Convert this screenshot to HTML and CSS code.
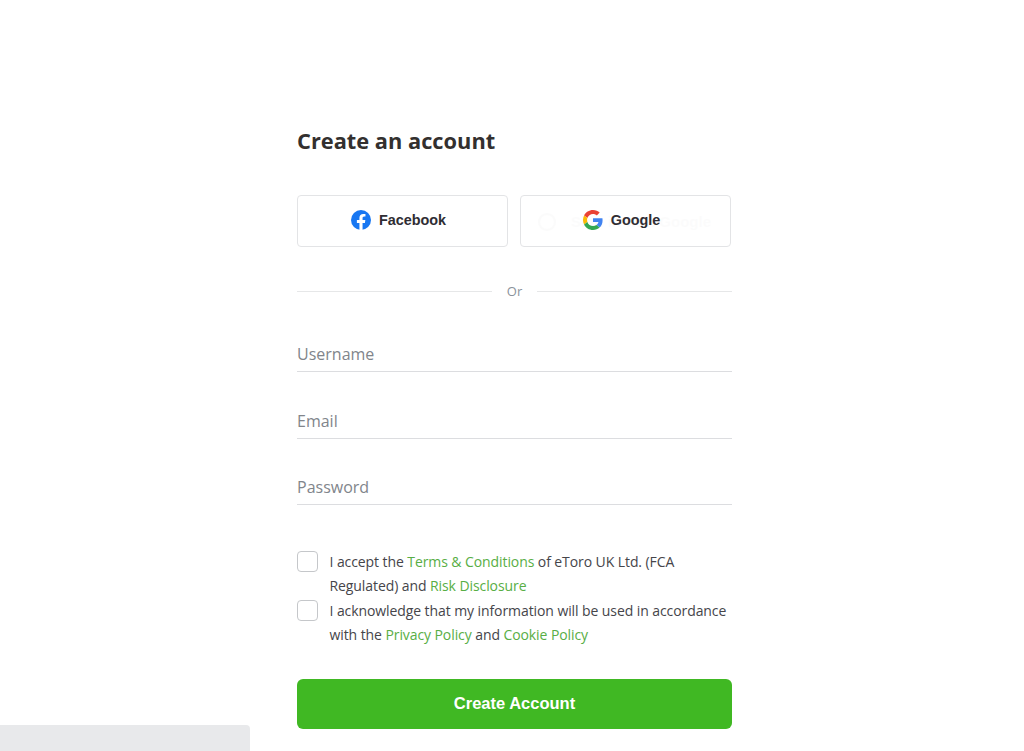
FILE: index.html
```html
<!DOCTYPE html>
<html lang="en">
<head>
    <meta charset="UTF-8">
    <meta name="viewport" content="width=device-width, initial-scale=1.0">
    <title>Create an account</title>
    <link rel="stylesheet" href="styles.css">
</head>
<body>
    <div class="container">
        <h1 class="title">Create an account</h1>

        <div class="social-row">
            <button class="social-btn" type="button">
                <svg class="social-icon" viewBox="0 0 20 20" aria-hidden="true">
                    <circle cx="10" cy="10" r="10" fill="#1877f2"/>
                    <path fill="#fff" d="M13.9 12.9l.44-2.9h-2.78V8.12c0-.79.39-1.56 1.63-1.56h1.26V4.1s-1.15-.2-2.24-.2c-2.29 0-3.78 1.39-3.78 3.9V10H5.89v2.9h2.54v7c.51.08 1.03.1 1.56.1s1.06-.03 1.57-.1v-7z"/>
                </svg>
                <span>Facebook</span>
            </button>
            <button class="social-btn" type="button">
                <span class="ghost-label">Sign in with Google</span>
                <svg class="social-icon" viewBox="0 0 48 48" aria-hidden="true">
                    <path fill="#ea4335" d="M24 9.5c3.54 0 6.71 1.22 9.21 3.6l6.85-6.85C35.9 2.38 30.47 0 24 0 14.62 0 6.51 5.38 2.56 13.22l7.98 6.19C12.43 13.72 17.74 9.5 24 9.5z"/>
                    <path fill="#4285f4" d="M46.98 24.55c0-1.57-.15-3.09-.38-4.55H24v9.02h12.94c-.58 2.96-2.26 5.48-4.78 7.18l7.73 6c4.51-4.18 7.09-10.36 7.09-17.65z"/>
                    <path fill="#fbbc05" d="M10.53 28.59c-.48-1.45-.76-2.99-.76-4.59s.27-3.14.76-4.59l-7.98-6.19C.92 16.46 0 20.12 0 24c0 3.88.92 7.54 2.56 10.78l7.97-6.19z"/>
                    <path fill="#34a853" d="M24 48c6.48 0 11.93-2.13 15.89-5.81l-7.73-6c-2.15 1.45-4.92 2.3-8.16 2.3-6.26 0-11.57-4.22-13.47-9.91l-7.98 6.19C6.51 42.62 14.62 48 24 48z"/>
                </svg>
                <span>Google</span>
            </button>
        </div>

        <div class="divider"><span>Or</span></div>

        <div class="fields">
            <label class="field">Username</label>
            <label class="field">Email</label>
            <label class="field">Password</label>
        </div>

        <div class="terms">
            <div class="check-row">
                <span class="checkbox"></span>
                <p>I accept the <a href="#">Terms &amp; Conditions</a> of eToro UK Ltd. (FCA Regulated) and <a href="#">Risk Disclosure</a></p>
            </div>
            <div class="check-row">
                <span class="checkbox"></span>
                <p>I acknowledge that my information will be used in accordance with the <a href="#">Privacy Policy</a> and <a href="#">Cookie Policy</a></p>
            </div>
        </div>

        <button class="submit-btn" type="button">Create Account</button>
    </div>

    <div class="corner-bar"></div>
</body>
</html>
```

FILE: styles.css
```css
* {
    margin: 0;
    padding: 0;
    box-sizing: border-box;
}

body {
    background: #fff;
    font-family: 'Open Sans', sans-serif;
    color: #45454a;
    height: 751px;
    overflow: hidden;
}

.container {
    width: 435px;
    margin-left: 297px;
    padding-top: 126px;
}

.title {
    font-size: 21.8px;
    line-height: 30px;
    font-weight: 700;
    color: #33302f;
}

.social-row {
    display: flex;
    gap: 12px;
    margin-top: 39px;
}

.social-btn {
    position: relative;
    width: 211px;
    height: 52px;
    display: flex;
    align-items: center;
    justify-content: center;
    gap: 8px;
    padding: 0 8px 2px 0;
    background: #fff;
    border: 1px solid #e3e4e6;
    border-radius: 4px;
    font-family: 'Liberation Sans', Arial, sans-serif;
    font-size: 14.4px;
    font-weight: 700;
    color: #2f2d33;
}

.social-icon {
    width: 20px;
    height: 20px;
}

.ghost-label {
    position: absolute;
    left: 50px;
    top: 17px;
    font-size: 15px;
    white-space: nowrap;
    opacity: 0.012;
}

.ghost-label::before {
    content: '';
    position: absolute;
    left: -33px;
    top: 0;
    width: 14px;
    height: 14px;
    border: 2px solid #000;
    border-radius: 50%;
}

.divider {
    display: flex;
    align-items: center;
    gap: 15px;
    margin-top: 35px;
    font-size: 13px;
    line-height: 18px;
    color: #8a929b;
}

.divider::before,
.divider::after {
    content: '';
    flex: 1;
    height: 1px;
    background: #e6e7e8;
}

.fields {
    margin-top: 35px;
}

.field {
    display: block;
    height: 37px;
    margin-bottom: 29.5px;
    border-bottom: 1px solid #dcdde0;
    font-size: 16px;
    line-height: 30px;
    padding-top: 4px;
    color: #81858b;
}

.terms {
    margin-top: 44.5px;
}

.check-row {
    display: flex;
    gap: 11.5px;
    font-size: 14px;
    line-height: 24.5px;
    letter-spacing: -0.085px;
}

.check-row a {
    color: #58ae45;
    text-decoration: none;
}

.checkbox {
    flex: none;
    width: 21px;
    height: 21px;
    margin-top: 1.5px;
    border: 1px solid #c5c7ca;
    border-radius: 4px;
}

.submit-btn {
    display: block;
    width: 100%;
    height: 50px;
    margin-top: 31.5px;
    padding-bottom: 2px;
    background: #40b823;
    border: none;
    border-radius: 6px;
    color: #fff;
    font-family: 'Liberation Sans', Arial, sans-serif;
    font-size: 16.5px;
    font-weight: 700;
}

.corner-bar {
    position: fixed;
    left: 0;
    bottom: 0;
    width: 250px;
    height: 26px;
    background: #e8e9eb;
    border-top-right-radius: 4px;
}
```
